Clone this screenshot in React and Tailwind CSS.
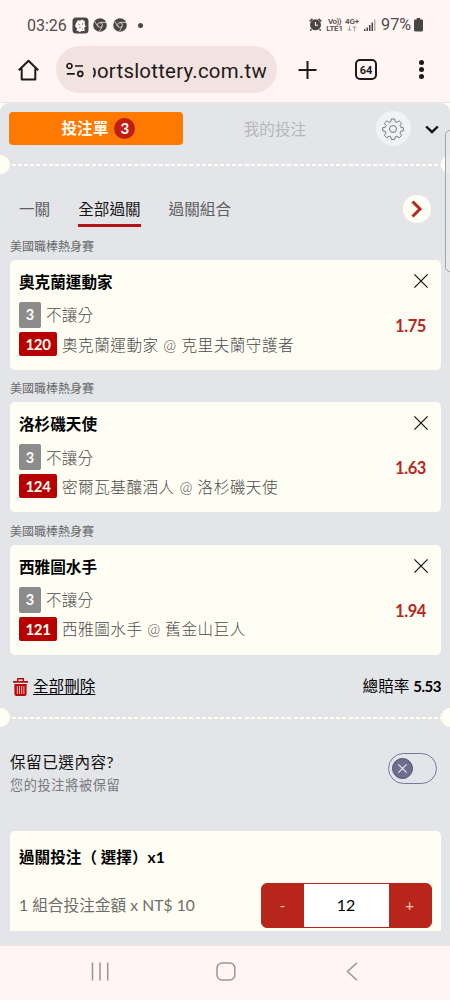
import { Fragment, useState } from "react";

const bets = [
  {
    league: "美國職棒熱身賽",
    team: "奧克蘭運動家",
    code: "120",
    match: "奧克蘭運動家 @ 克里夫蘭守護者",
    odds: "1.75",
  },
  {
    league: "美國職棒熱身賽",
    team: "洛杉磯天使",
    code: "124",
    match: "密爾瓦基釀酒人 @ 洛杉磯天使",
    odds: "1.63",
  },
  {
    league: "美國職棒熱身賽",
    team: "西雅圖水手",
    code: "121",
    match: "西雅圖水手 @ 舊金山巨人",
    odds: "1.94",
  },
];

const ChromeIcon = () => (
  <svg width="14" height="14" viewBox="0 0 14 14" fill="none">
    <circle cx="7" cy="7" r="6.8" fill="#4b4646" />
    <circle cx="7" cy="7" r="2.4" stroke="#d9cfce" strokeWidth="0.9" />
    <path d="M7 4.4h6M4.7 8.3 1.8 3.4M9.3 8.3 6.4 13.4" stroke="#d9cfce" strokeWidth="0.9" />
  </svg>
);

const StatusBar = () => (
  <div className="flex items-center h-[50px] pl-[27px] pr-[27px] text-[#514b4b]">
    <div className="w-[41px] pt-px text-[16px] leading-none whitespace-nowrap">03:26</div>
    <svg className="ml-[4px]" width="17" height="17" viewBox="0 0 17 17">
      <rect x="0.5" y="0.5" width="16" height="16" rx="3.5" fill="#4b4646" />
      <path
        d="M4 6 6 3l2 .7L10 2.5l3 2-.3 2.500 1 2.500-1.500 1.500.6 3H9.500L8 15l-3.500-1.500L5 11 3 9.500Z"
        fill="#fff6f4"
      />
      <path d="m6 7 2 1M10.500 6v2M7 11l2-1M10 12h1" stroke="#8a8484" strokeWidth="0.9" />
    </svg>
    <div className="flex gap-[6px] ml-[4px]">
      <ChromeIcon />
      <ChromeIcon />
    </div>
    <div className="size-[5px] rounded-full bg-[#4b4646] ml-[11px]" />
    <div className="flex items-center ml-auto">
      <svg width="13" height="13" viewBox="0 0 13 13" fill="none">
        <circle cx="6.500" cy="6.800" r="5.500" fill="#4b4646" />
        <path d="M.7 3.300 3.500.9M12.300 3.300 9.500.9M2.500 11.300 1.200 12.500M10.500 11.300l1.300 1.200" stroke="#4b4646" strokeWidth="1.600" />
        <path d="M6.500 4v3.200H9" stroke="#fff3f1" strokeWidth="1.100" />
      </svg>
      <div className="w-[17px] ml-[4px] text-[8px] leading-[7px] font-semibold text-center whitespace-nowrap">
        <div className="tracking-[-0.6px]">Vo))</div>
        <div className="tracking-[-0.2px]">LTE1</div>
      </div>
      <div className="flex flex-col items-center w-[14px] ml-[2px] text-[8px] leading-[7px] font-semibold">
        <div className="tracking-[-0.2px]">4G+</div>
        <svg width="10" height="7" viewBox="0 0 10 7" fill="none" stroke="#aaa4a3">
          <path d="M2.500.8v5M.7 4l1.800 1.900L4.300 4M7.500 6.200v-5M5.700 3l1.800-1.900L9.300 3" />
        </svg>
      </div>
      <svg className="ml-[5px]" width="12" height="12" viewBox="0 0 12 12" fill="#4b4646">
        <path d="M0 10h1.500v2H0zM2.500 8.500H4V12H2.500zM5 6h1.500v6H5zM7.500 3.500H9V12H7.500z" />
        <path d="M10 .5h1.500V12H10z" fill="#b5adac" />
      </svg>
      <div className="w-[30px] pt-px ml-[5px] text-[16.3px] leading-none whitespace-nowrap">97%</div>
      <svg className="ml-[3px]" width="9" height="14" viewBox="0 0 9 14" fill="#4b4646">
        <path d="M2.700 0h3.600v1.500H8A1 1 0 0 1 9 2.500V12a1.500 1.500 0 0 1-1.500 1.500h-6A1.500 1.500 0 0 1 0 12V2.500a1 1 0 0 1 1-1h1.700z" />
      </svg>
    </div>
  </div>
);

const AddressBar = () => (
  <div className="flex items-start h-[53px] pl-[18px] border-b border-[#f7dedb]">
    <svg className="mt-[9px]" width="21" height="22" viewBox="0 0 21 22" fill="none" stroke="#1f1a1a" strokeWidth="2">
      <path d="M.8 11.200 10.500 1.800l9.700 9.400M3.700 9.500v11h13.600v-11" strokeLinejoin="round" />
    </svg>
    <div className="flex items-center w-[221px] h-[47px] -mt-[4px] ml-[17px] pl-[10px] rounded-full bg-[#f2e3e1]">
      <svg width="18" height="16" viewBox="0 0 18 16" fill="none" stroke="#1f1a1a" strokeWidth="1.700">
        <circle cx="3.500" cy="4" r="2.500" />
        <circle cx="14.300" cy="11.800" r="2.500" />
        <path d="M9 4h8M.8 11.800h8" />
      </svg>
      {/* the host keeps its right end in view, the left end runs out of the box */}
      <div className="flex justify-end w-[174px] ml-[9px] mt-[3px] overflow-hidden text-[20.4px] leading-[28px] tracking-[0.25px] text-[#1f1a1a] whitespace-nowrap">
        portslottery.com.tw
      </div>
    </div>
    <svg className="mt-[10px] ml-[21px]" width="19" height="20" viewBox="0 0 19 20" stroke="#1f1a1a" strokeWidth="2">
      <path d="M9.500 1v18M.5 10h18" />
    </svg>
    <div className="flex items-center justify-center w-[22px] h-[21px] mt-[9px] ml-[38px] rounded-[5px] border-2 border-[#1f1a1a] pt-px text-[11px] font-bold leading-none text-[#1f1a1a]">
      64
    </div>
    <div className="flex flex-col gap-[2px] mt-[10px] ml-[42px]">
      <div className="size-[5px] rounded-full bg-[#1f1a1a]" />
      <div className="size-[5px] rounded-full bg-[#1f1a1a]" />
      <div className="size-[5px] rounded-full bg-[#1f1a1a]" />
    </div>
  </div>
);

const Divider = () => (
  <div className="flex items-center justify-between h-5 -ml-[10px] -mr-[9px] overflow-hidden">
    <div className="w-[10px] h-[19px] rounded-r-full bg-[#fffef5]" />
    <div className="flex-1 h-[2px] mt-px ml-[2px] bg-[repeating-linear-gradient(90deg,#fffef5_0px,#fffef5_4px,transparent_4px,transparent_6.12px)]" />
    <div className="w-[9px] h-[19px] rounded-l-full bg-[#fffef5]" />
  </div>
);

const BetCard = ({ bet }) => (
  <Fragment>
    <div className="h-[26px] pt-px text-[12px] leading-[24px] text-[#696a6c]">{bet.league}</div>
    <div className="flex justify-between h-[110px] rounded-[5px] bg-[#fffef5] pl-[9px] pr-[13px]">
      <div>
        <div className="mt-[10px] text-[15.6px] leading-[24px] font-bold text-black">{bet.team}</div>
        <div className="flex items-center h-[26px] mt-[8px]">
          <div className="flex items-center justify-center w-[22px] h-[26px] rounded-[2px] bg-[#8c8c8c] text-[14.5px] font-bold text-[#fffef5]">
            3
          </div>
          <div className="ml-[5px] pt-[2px] text-[15.6px] leading-none tracking-[0.2px] font-light text-[#4c4b48]">不讓分</div>
        </div>
        <div className="flex items-center h-[24px] mt-[4px]">
          <div className="flex items-center justify-center w-[38px] h-[24px] rounded-[2px] bg-[#b80000] text-[15px] tracking-[-0.3px] font-bold text-[#fffef5]">
            {bet.code}
          </div>
          <div className="ml-[5px] pt-[3px] text-[15.6px] leading-none tracking-[0.5px] font-light text-[#4c4b48] whitespace-nowrap">
            {bet.match}
          </div>
        </div>
      </div>
      <div className="flex flex-col items-end">
        <button className="mt-[14px]">
          <svg width="14" height="14" viewBox="0 0 14 14" stroke="#111" strokeWidth="1.200">
            <path d="m.4.4 13.200 13.200M13.600.4.4 13.600" />
          </svg>
        </button>
        <div className="mt-[25px] mr-[2px] text-[16.5px] leading-[26px] tracking-[-0.4px] font-bold text-[#b7281c]">
          {bet.odds}
        </div>
      </div>
    </div>
  </Fragment>
);

const App = () => {
  const [amount, setAmount] = useState(12);

  return (
    <div className="relative flex flex-col w-[450px] h-[1000px] overflow-hidden bg-[#fff5f4] font-[Roboto,'Noto_Sans_CJK_TC',sans-serif]">
      <StatusBar />
      <AddressBar />
      <div className="bg-[#fffef5]">
        <div className="h-[842px] pl-[10px] pr-[9px] rounded-t-[9px] bg-[#e3e5e8] overflow-hidden font-[Lato,'Noto_Sans_CJK_TC',sans-serif]">
          <div className="flex items-center h-[51px]">
            <button className="flex items-center justify-center gap-[6px] w-[174px] h-[33px] -ml-[0.6px] pl-[4px] rounded-[4px] bg-[#ff7900] text-[15.6px] font-bold text-[#fffef5]">
              <span className="pt-px">投注單</span>
              <span className="flex items-center justify-center size-[21px] rounded-full bg-[#c11d12] text-[15px] font-bold leading-none">
                3
              </span>
            </button>
            <div className="w-[183px] pt-[2px] text-center text-[15.6px] text-[#b6b7b9]">我的投注</div>
            <button className="flex items-center justify-center size-[35px] ml-[9.5px] rounded-full bg-[#f0f2f6]">
              <svg width="22" height="22" viewBox="0 0 22 22" fill="none" stroke="#77787b" strokeWidth="1">
                <circle cx="11" cy="11" r="3.500" />
                <path
                  d="M9.300 1h3.400l.5 2.700 1.700.7 2.300-1.600 2.400 2.400L18 7.500l.7 1.700 2.600.5v3.200l-2.600.5-.7 1.700 1.600 2.300-2.400 2.400-2.300-1.600-1.700.7-.5 2.500H9.300l-.5-2.500-1.700-.7-2.300 1.600-2.400-2.400L4 15.100l-.7-1.700-2.600-.5V9.700l2.600-.5L4 7.500 2.400 5.200l2.400-2.400 2.300 1.600 1.700-.7z"
                  strokeLinejoin="round"
                />
              </svg>
            </button>
            <svg className="mt-[2px] ml-[14px]" width="14" height="9" viewBox="0 0 14 9" fill="none" stroke="#050505" strokeWidth="2.400">
              <path d="m1.200 1.500 5.800 5.500 5.800-5.500" />
            </svg>
          </div>
          <Divider />
          <div className="flex items-center h-[69px] text-[15.6px] leading-none text-[#5e5f61]">
            <div className="ml-[9px] mt-[2px]">一關</div>
            <div className="flex items-center h-[36px] ml-[28px] pt-[4px] border-b-[3px] border-[#b31217] text-[#151515] mt-px">
              全部過關
            </div>
            <div className="ml-[28px] mt-[2px]">過關組合</div>
            <button className="flex items-center justify-center size-[28px] ml-auto mr-[10px] rounded-full bg-[#fffef5]">
              <svg width="12" height="18" viewBox="0 0 12 18" fill="none" stroke="#b7281c" strokeWidth="3">
                <path d="m1.500 1.500 7.500 7.500-7.500 7.500" />
              </svg>
            </button>
          </div>
          <div className="flex flex-col -mt-[10px]">
            {bets.map((bet, i) => (
              <div key={bet.code} className={i > 0 ? "mt-[6.4px]" : "mt-[1px]"}>
                <BetCard bet={bet} />
              </div>
            ))}
          </div>
          <div className="flex items-center justify-between h-[53.2px] pt-[11px] text-[15.6px] text-black">
            <button className="flex items-center ml-[3px]">
              <svg width="15" height="18" viewBox="0 0 15 18" fill="#b9090b">
                <path d="M0 3h15v1.800H0zM4 0h7v3H9.700V1.400H5.300V3H4zM1.400 6h12.200v10a2 2 0 0 1-2 2H3.400a2 2 0 0 1-2-2z" />
                <path d="M4.300 8v8M6.500 8v8M8.700 8v8M10.900 8v8" stroke="#e3c9ca" strokeWidth="0.900" />
              </svg>
              <span className="ml-[5px] underline underline-offset-[2px]">全部刪除</span>
            </button>
            <div className="whitespace-nowrap">
              總賠率 <span className="text-[15px] tracking-[-0.5px] font-bold">5.53</span>
            </div>
          </div>
          <Divider />
          <div className="flex items-start justify-between h-[103px] pt-[22px]">
            <div>
              <div className="text-[15.6px] leading-[24px] tracking-[0.5px] text-[#111]">保留已選內容?</div>
              <div className="pt-px text-[13.2px] leading-[20px] tracking-[0.6px] text-[#77787b]">您的投注將被保留</div>
            </div>
            <button className="flex items-center w-[49px] h-[31px] mt-[3px] mr-[4px] pl-[3px] rounded-full border border-[#77789a]">
              <span className="flex items-center justify-center size-[21px] rounded-full border border-[#4d4e77] bg-[#6d6e8f]">
                <svg width="9" height="9" viewBox="0 0 9 9" stroke="#eeeef4" strokeWidth="1.100">
                  <path d="m.4.4 8.200 8.200M8.600.4.4 8.600" />
                </svg>
              </span>
            </button>
          </div>
          <div className="h-[100px] pl-[9px] pr-[9.5px] rounded-t-[5px] bg-[#fffef5]">
            <div className="pt-[14px] text-[15.6px] leading-[25px] font-bold text-black whitespace-pre">過關投注（ 選擇）x1</div>
            <div className="flex items-center justify-between mt-[13px]">
              <div className="pt-px text-[15.6px] tracking-[0.08px] text-[#6d6c69] whitespace-nowrap">1 組合投注金額 x NT$ 10</div>
              <div className="flex w-[171px] h-[45px] rounded-[6px] overflow-hidden bg-[#b7251b] border border-[#b7251b]">
                <button onClick={() => setAmount(Math.max(1, amount - 1))} className="w-[42px] text-[15px] text-[#ecc5bf]">
                  -
                </button>
                <div className="flex items-center justify-center w-[85px] bg-white text-[16px] text-black">{amount}</div>
                <button onClick={() => setAmount(amount + 1)} className="w-[42px] text-[15px] text-[#ecc5bf]">
                  +
                </button>
              </div>
            </div>
          </div>
        </div>
      </div>
      <div className="flex items-start h-[55px] pt-[16px] border-t border-[#f7dedb]">
        <svg className="ml-[91px]" width="18" height="19" viewBox="0 0 18 19" stroke="#9b9493" strokeWidth="1.500">
          <path d="M1.500.5v18M9 .5v18M16.700.5v18" />
        </svg>
        <svg className="ml-[107px]" width="20" height="19" viewBox="0 0 20 19" fill="none" stroke="#9b9493" strokeWidth="1.500">
          <rect x="1" y="1" width="17.800" height="17" rx="5" />
        </svg>
        <svg className="ml-[110px]" width="12" height="19" viewBox="0 0 12 19" fill="none" stroke="#9b9493" strokeWidth="1.500">
          <path d="M11 .7 1.500 9.500l9.500 8.800" />
        </svg>
      </div>
      {/* edge panel handle */}
      <div className="absolute left-[445px] top-[130px] w-[12px] h-[142px] rounded-[5px] border border-[#a4a5a8] bg-[#e6e8eb]/80" />
    </div>
  );
};

export default App;
